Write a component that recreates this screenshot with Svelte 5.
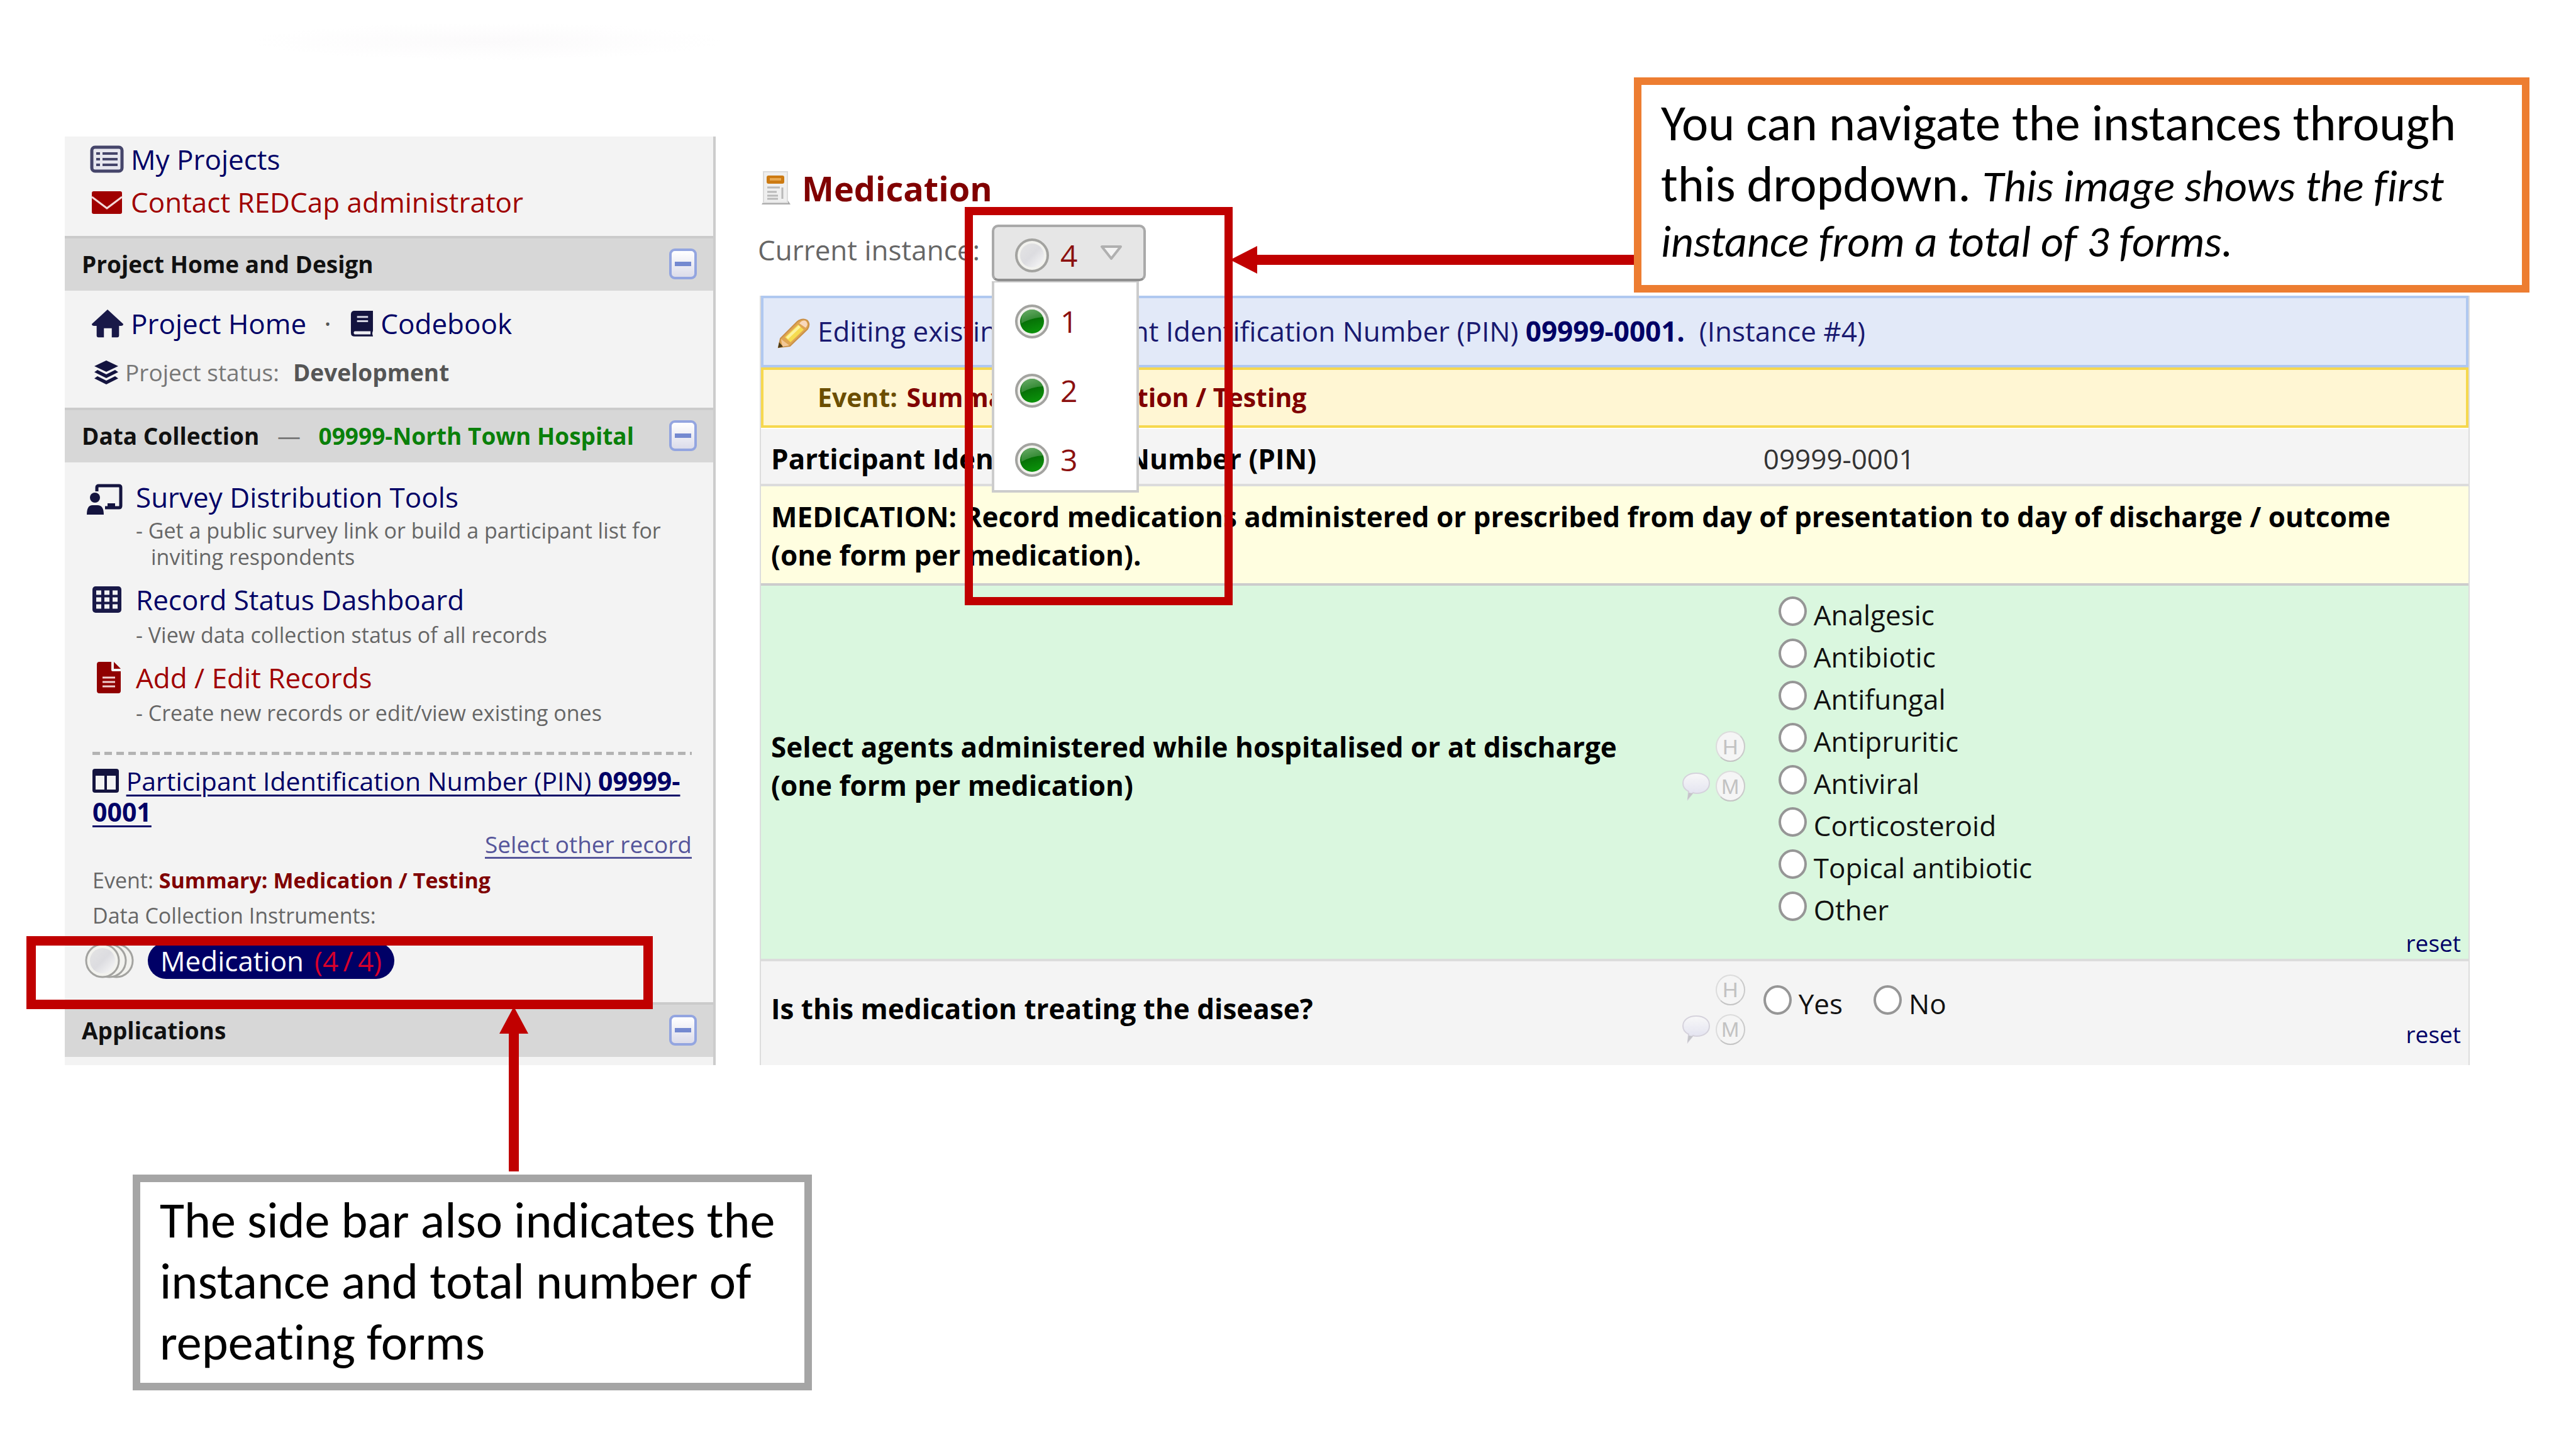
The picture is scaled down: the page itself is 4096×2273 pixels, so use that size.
<script>
  const agents = ['Analgesic', 'Antibiotic', 'Antifungal', 'Antipruritic', 'Antiviral', 'Corticosteroid', 'Topical antibiotic', 'Other'];
  const instances = [1, 2, 3];
  let agent = $state('');
  let treating = $state('');
</script>

{#snippet collapse(label)}
  <button class="collapse" aria-label={`Collapse ${label}`}><span></span></button>
{/snippet}

{#snippet dot(kind)}
  <svg class="dot" viewBox="0 0 54 54" aria-hidden="true">
    <circle cx="27" cy="27" r="25" fill="#f2f2ee" stroke="#a3a3a0" stroke-width="4" />
    {#if kind === 'green'}
      <circle cx="27" cy="27" r="19" fill="url(#dot-green)" />
      <path d="M10 30 Q8 10 27 8 Q42 9 45 20 Q26 21 10 30Z" fill="#fff" opacity=".2" />
    {:else}
      <circle cx="27" cy="27" r="19" fill="url(#dot-gray)" />
    {/if}
  </svg>
{/snippet}

{#snippet tools()}
  <div class="tools">
    <button class="badge history" aria-label="History">H</button>
    <button class="bubble" aria-label="Comment">
      <svg viewBox="0 0 46 46" aria-hidden="true">
        <path d="M23 2C35 2 44 8 44 18S35 34 24 34C22 34 20 34 18 33L10 43L11 31C5 28 2 24 2 18C2 8 11 2 23 2Z" fill="url(#bubble-fill)" stroke="#d5d2dc" stroke-width="2" />
        <path d="M11 33L18 34L9 44Z" fill="#c4c4c8" />
      </svg>
    </button>
    <button class="badge" aria-label="Missing data code">M</button>
  </div>
{/snippet}

<svg class="defs" aria-hidden="true">
  <defs>
    <linearGradient id="dot-green" x1="0" y1="0" x2="0.3" y2="1">
      <stop offset="0" stop-color="#4a9a48" />
      <stop offset="0.5" stop-color="#067006" />
      <stop offset="1" stop-color="#0a8f0a" />
    </linearGradient>
    <linearGradient id="dot-gray" x1="0" y1="0" x2="1" y2="1">
      <stop offset="0" stop-color="#e4e4e4" />
      <stop offset="0.5" stop-color="#dcdce0" />
      <stop offset="1" stop-color="#fafafa" />
    </linearGradient>
    <linearGradient id="bubble-fill" x1="0" y1="0" x2="0" y2="1">
      <stop offset="0" stop-color="#f8f8f8" />
      <stop offset="1" stop-color="#dedeee" />
    </linearGradient>
  </defs>
</svg>

<div class="page">
  <div class="smudge"></div>
  <div class="shot">
    <aside class="sidebar">
      <div class="block top">
        <a class="link" href="#projects">
          <svg class="ic" viewBox="0 0 54 44"><rect x="3" y="3" width="48" height="38" rx="5" fill="#e6e6ee" stroke="#45456a" stroke-width="5" /><path d="M10 13h6M10 22h6M10 31h6M20 13h24M20 22h24M20 31h24" stroke="#45456a" stroke-width="4" /></svg>
          My Projects
        </a>
        <a class="link red" href="#contact">
          <svg class="ic" viewBox="0 0 54 44"><rect x="3" y="5" width="48" height="36" rx="3" fill="#a00000" /><path d="M3 14L27 32L51 14" fill="none" stroke="#f3d9d9" stroke-width="3" /></svg>
          Contact REDCap administrator
        </a>
      </div>

      <h2 class="bar"><span>Project Home and Design</span>{@render collapse('Project Home and Design')}</h2>
      <div class="block home">
        <div class="row">
          <a class="link" href="#home">
            <svg class="ic" viewBox="0 0 54 48"><path d="M27 1L53 25Q53 28 49 28H46V44Q46 47 43 47H34V32H21V47H12Q9 47 9 44V28H5Q1 28 1 25Z" fill="#191948" /></svg>
            Project Home
          </a>
          <span class="mid">·</span>
          <a class="link book" href="#codebook">
            <svg viewBox="0 0 38 44"><path d="M7 1H37V34Q35 38 37 42V43H7Q1 43 1 37V7Q1 1 7 1Z" fill="#14143f" /><path d="M11 11H29M11 18H29" stroke="#d5d5e2" stroke-width="3" /><path d="M7 34.500H33V39.500H7Q4 37 7 34.500Z" fill="#eeeef4" /></svg>
            Codebook
          </a>
        </div>
        <div class="row status">
          <svg viewBox="0 0 40 40"><path d="M20 1L39 10L20 19L1 10Z" fill="#14143f" /><path d="M6 16L20 23L34 16L39 19.500L20 29L1 19.500Z" fill="#14143f" /><path d="M6 26L20 33L34 26L39 29.500L20 39L1 29.500Z" fill="#14143f" /></svg>
          <span>Project status:</span><b>Development</b>
        </div>
      </div>

      <h2 class="bar">
        <span>Data Collection <span class="dash">—</span> <span class="site">09999-North Town Hospital</span></span>
        {@render collapse('Data Collection')}
      </h2>
      <div class="block data">
        <div class="tool">
          <svg class="teach" viewBox="0 0 58 50"><path d="M17 12V6Q17 3 20 3H52Q55 3 55 6V35Q55 38 52 38H30" fill="none" stroke="#14143f" stroke-width="5" /><path d="M34 37V31H46V37Z" fill="#14143f" /><circle cx="14" cy="22" r="8" fill="#14143f" /><path d="M1 49Q1 34 10 34H18Q28 34 28 49Z" fill="#14143f" /></svg>
          <a class="link" href="#survey">Survey Distribution Tools</a>
          <p class="close">- Get a public survey link or build a participant list for inviting respondents</p>
        </div>
        <div class="tool">
          <svg class="grid" viewBox="0 0 46 42"><rect x="0" y="0" width="46" height="42" rx="5" fill="#191948" /><path d="M6 10H40M6 21H40M6 32H40" stroke="#f3f3f3" stroke-width="7" stroke-dasharray="8 5" /></svg>
          <a class="link" href="#dashboard">Record Status Dashboard</a>
          <p>- View data collection status of all records</p>
        </div>
        <div class="tool">
          <svg class="doc" viewBox="0 0 38 50"><path d="M4 0H23V13Q23 15 25 15H38V46Q38 50 34 50H4Q0 50 0 46V4Q0 0 4 0Z" fill="#900000" /><path d="M27 0L38 11H27Z" fill="#900000" /><path d="M9 25H29M9 32H29M9 39H29" stroke="#efd0d0" stroke-width="3" /></svg>
          <a class="link red" href="#records">Add / Edit Records</a>
          <p>- Create new records or edit/view existing ones</p>
        </div>

        <hr />

        <div class="record">
          <svg viewBox="0 0 42 38"><path d="M4 0H38Q42 0 42 4V34Q42 38 38 38H4Q0 38 0 34V4Q0 0 4 0Z" fill="#14143f" /><path d="M5 11H19V33H5ZM23 11H37V33H23Z" fill="#f3f3f3" /></svg>
          <a href="#record">Participant Identification Number (PIN) <b>09999-0001</b></a>
        </div>
        <a class="other" href="#other">Select other record</a>
        <p class="meta">Event: <b>Summary: Medication / Testing</b></p>
        <p class="meta">Data Collection Instruments:</p>
        <div class="instrument">
          <svg viewBox="0 0 78 58" aria-hidden="true">
            <circle cx="50" cy="29" r="26" fill="#f2f2ee" stroke="#a3a3a0" stroke-width="3" />
            <circle cx="39" cy="29" r="26" fill="#f2f2ee" stroke="#a3a3a0" stroke-width="3" />
            <circle cx="28" cy="29" r="26" fill="#f2f2ee" stroke="#a3a3a0" stroke-width="3" />
            <circle cx="28" cy="29" r="20" fill="url(#dot-gray)" />
          </svg>
          <a class="pill" href="#medication">Medication <span>(4&#8201;/&#8201;4)</span></a>
        </div>
      </div>

      <h2 class="bar"><span>Applications</span>{@render collapse('Applications')}</h2>
    </aside>

    <main>
      <h1>
        <svg viewBox="0 0 46 54" aria-hidden="true"><path d="M0 53H46L42 47H4Z" fill="#a9a9a9" /><rect x="3" y="1" width="38" height="49" fill="#efefef" stroke="#dcdcdc" stroke-width="2" /><rect x="8" y="7" width="28" height="13" rx="3" fill="#cc7a12" /><path d="M13 13H31" stroke="#e8a850" stroke-width="4" /><path d="M9 26H29M9 33H24M9 39H26M9 44H26M33 26V44" stroke="#b9b9b9" stroke-width="3" /></svg>
        Medication
      </h1>

      <div class="current">
        <span class="label">Current instance:</span>
        <div class="picker">
          <button class="toggle" aria-haspopup="true" aria-expanded="true">
            {@render dot('gray')}<span>4</span>
            <svg class="tri" viewBox="0 0 36 26" aria-hidden="true"><path d="M3 3H33L18 22Z" fill="#f4f4f4" stroke="#b0b0b0" stroke-width="4" stroke-linejoin="round" /></svg>
          </button>
          <ul class="menu">
            {#each instances as n}
              <li><button>{@render dot('green')}<span>{n}</span></button></li>
            {/each}
          </ul>
        </div>
      </div>

      <form class="sheet">
        <div class="notice editing">
          <svg viewBox="0 0 52 48" aria-hidden="true"><path d="M2 46L5 32L32 5Q40 -1 47 3Q53 9 48 17L20 44Z" fill="#dfa552" stroke="#c99048" stroke-width="2" /><path d="M12 30L33 10L42 18L21 38Z" fill="#f6dc50" /><path d="M14 30L34 11L37 14L17 33Z" fill="#fcf2a0" /><path d="M35 8Q41 1 46 5Q50 10 45 15Z" fill="#f8d8bc" /><path d="M6 33L19 43L8 45Z" fill="#f2c898" /><path d="M3 38L9 45L1 47Z" fill="#4a3a18" /></svg>
          <span>Editing existing Participant Identification Number (PIN) <b>09999-0001.</b>&nbsp; (Instance #4)</span>
        </div>
        <div class="notice event"><span>Event:</span> Summary: Medication / Testing</div>

        <div class="line id">
          <div class="q">Participant Identification Number (PIN)</div>
          <div class="field">09999-0001</div>
        </div>
        <div class="section">MEDICATION: Record medications administered or prescribed from day of presentation to day of discharge / outcome (one form per medication).</div>
        <div class="line agents" role="radiogroup" aria-labelledby="q-agents">
          <div class="q" id="q-agents">Select agents administered while hospitalised or at discharge (one form per medication)</div>
          {@render tools()}
          <div class="field">
            {#each agents as a}
              <label class="option"><input type="radio" name="agent" value={a} bind:group={agent} />{a}</label>
            {/each}
            <button type="button" class="reset" onclick={() => (agent = '')}>reset</button>
          </div>
        </div>
        <div class="line treat" role="radiogroup" aria-labelledby="q-treat">
          <div class="q" id="q-treat">Is this medication treating the disease?</div>
          {@render tools()}
          <div class="field">
            <div class="pair">
              {#each ['Yes', 'No'] as v}
                <label class="option"><input type="radio" name="treating" value={v} bind:group={treating} />{v}</label>
              {/each}
            </div>
            <button type="button" class="reset" onclick={() => (treating = '')}>reset</button>
          </div>
        </div>
      </form>
    </main>
  </div>

  <div class="frame frame-dropdown"></div>
  <div class="frame frame-sidebar"></div>
  <svg class="arrow arrow-left" viewBox="0 0 642 44" aria-hidden="true"><path d="M0 22L43 0V14H642V30H43V44Z" fill="#c00000" /></svg>
  <svg class="arrow arrow-up" viewBox="0 0 46 262" aria-hidden="true"><path d="M23 0L46 43H31V262H15V43H0Z" fill="#c00000" /></svg>
  <div class="note note-dropdown"><span>You can navigate the instances through this dropdown.{' '}</span><em>This image shows the first instance from a total of 3 forms.</em></div>
  <div class="note note-sidebar"><span>The side bar also indicates the instance and total number of repeating forms</span></div>
</div>

<style>
  :global(body) { margin: 0; background: #fff; }
  * { box-sizing: border-box; }
  .page { position: relative; min-height: 100vh; overflow: hidden; font-family: "Open Sans", "Noto Sans", sans-serif; font-size: 44px; color: #111; }
  .defs { position: absolute; width: 0; height: 0; }
  .smudge { position: absolute; left: 400px; top: 36px; width: 750px; height: 60px; background: radial-gradient(closest-side, #fbfafb, #fff); }
  .shot { display: flex; gap: 70px; padding: 217px 169px 0 103px; }
  svg { display: block; flex: none; }
  button { font: inherit; color: inherit; padding: 0; margin: 0; border: 0; background: none; cursor: pointer; }
  a { color: #000066; text-decoration: none; }
  p, h1, h2, ul { margin: 0; padding: 0; }

  .sidebar { flex: none; width: 1035px; background: #f3f3f3; border-right: 4px solid #ccc; }
  .link { display: flex; align-items: center; line-height: 60px; white-space: nowrap; }
  .red { color: #a00000; }
  .ic { width: 54px; margin-right: 11px; }
  .top { padding: 2px 0 20px 40px; }
  .top .link { line-height: 68px; }
  .bar { display: flex; align-items: center; justify-content: space-between; border-top: 4px solid #cbcbcb; background: #d7d7d7; padding: 15px 26px 17px 27px; font-size: 37px; line-height: 51px; font-weight: 700; color: #111; }
  .dash { font-weight: 400; color: #777; margin: 0 19px; }
  .site { color: #0a800a; }
  .collapse { width: 44px; height: 49px; border: 4px solid #93a5e0; border-radius: 9px; background: linear-gradient(#fff, #dcdcea); display: grid; place-items: center; }
  .collapse span { width: 26px; height: 7px; background: #7489d0; }
  .home { padding: 22px 0 26px 42px; }
  .home .ic { width: 52px; }
  .row { display: flex; align-items: center; white-space: nowrap; }
  .mid { width: 70px; padding-left: 28px; line-height: 60px; color: #555; }
  .book svg { width: 37px; margin-right: 11px; }
  .status { margin-top: 18px; gap: 10px; font-size: 37px; line-height: 60px; color: #777; padding-left: 4px; }
  .status svg { width: 40px; }
  .status b { margin-left: 12px; color: #555; }

  .data { padding: 25px 34px 37px 44px; }
  .tool { display: grid; grid-template-columns: 69px 1fr; align-items: center; margin-bottom: 17px; }
  .tool p { grid-column: 2; margin-top: 5px; padding-left: 24px; text-indent: -24px; font-size: 34px; line-height: 42px; color: #666; }
  .tool .close { margin-top: 2px; }
  .teach { width: 58px; margin-left: -10px; margin-top: 8px; }
  .grid { width: 46px; }
  .doc { width: 38px; margin-left: 7px; }
  hr { height: 5px; margin: 41px 0 17px; border: 0; background: repeating-linear-gradient(90deg, #b3b3b3 0 12px, transparent 12px 19px); }
  .record { font-size: 41px; line-height: 49px; }
  .record svg { display: inline-block; width: 42px; margin-right: 1px; vertical-align: -3px; }
  .record a { text-decoration: underline; text-decoration-thickness: 3px; text-underline-offset: 6px; }
  .other { display: block; margin: 2px 0 4px; text-align: right; font-size: 37px; line-height: 50px; color: #55559a; text-decoration: underline; text-decoration-thickness: 3px; text-underline-offset: 6px; }
  .meta { font-size: 34px; line-height: 56px; color: #666; white-space: nowrap; }
  .meta b { color: #800000; }
  .instrument { display: flex; align-items: center; gap: 22px; margin: 15px 0 0 -12px; }
  .instrument svg { width: 78px; }
  .pill { display: flex; gap: 17px; padding: 0 20px; border-radius: 30px; background: #000066; color: #fff; line-height: 58px; white-space: nowrap; }
  .pill span { color: #d8002c; }

  main { flex: 1; min-width: 0; padding-top: 46px; }
  h1 { display: flex; align-items: center; gap: 18px; padding-left: 3px; font-size: 54px; line-height: 72px; color: #800000; }
  h1 svg { width: 46px; }
  .current { display: flex; align-items: center; margin: 22px 0 23px -3px; color: #666; }
  .label { width: 372px; padding-bottom: 10px; white-space: nowrap; }
  .picker { position: relative; font-size: 48px; color: #8b1010; }
  .toggle { display: flex; align-items: center; width: 245px; height: 90px; padding: 8px 0 0 33px; border: 4px solid #a9a9a9; border-bottom-color: #8f8f8f; border-radius: 10px; background: #e6e6e6; line-height: 60px; }
  .toggle span, .menu span { margin-left: 18px; }
  .dot { width: 54px; }
  .tri { width: 36px; margin: 0 0 8px 36px; }
  .menu { position: absolute; z-index: 1; left: 0; top: 90px; display: flex; flex-direction: column; gap: 56px; width: 234px; padding: 35px 0 21px 33px; border: 4px solid #ccc; border-top-width: 2px; background: #fff; list-style: none; }
  .menu button { display: flex; align-items: center; height: 54px; line-height: 54px; }

  .sheet { border: 2px solid #ddd; border-width: 0 2px; }
  .notice { display: flex; align-items: center; white-space: pre; }
  .editing { gap: 12px; height: 114px; padding: 0 0 2px 22px; border: 4px solid #b0c8f0; background: #e2e9f8; color: #191970; }
  .editing svg { width: 52px; margin-top: 8px; }
  .editing b { color: #000066; }
  .event { height: 96px; margin-bottom: 2px; padding: 0 0 2px 86px; border: 4px solid #f6d84e; background: #fff6d3; font-size: 41px; font-weight: 700; color: #800000; }
  .event span { margin-right: 4px; color: #6b4e00; }

  .line { display: grid; grid-template-columns: 1442fr 150fr 1120fr; align-items: center; border-bottom: 4px solid #dcdcdc; background: #f4f4f4; }
  .q { padding-left: 16px; font-weight: 700; line-height: 61px; color: #000; }
  .id { padding: 17px 0 9px; line-height: 61px; }
  .id .field { grid-column: 3; color: #333; }
  .section { padding: 18px 60px 14px 16px; min-height: 156px; line-height: 61px; font-weight: 700; color: #000; border-bottom: 4px solid #ccc; background: #fffee0; }
  .agents { background: #daf7df; }
  .agents .q, .agents .tools { margin-bottom: 19px; }
  .field { position: relative; }
  .agents .field { padding: 13px 0 44px 24px; }
  .option { display: flex; align-items: center; line-height: 67px; white-space: nowrap; }
  .option input { appearance: none; width: 45px; height: 47px; margin: 0 11px 12px 0; border: 4px solid #969696; border-radius: 50%; background: #fff; }
  .option input:checked { background: #1a73e8; }
  .reset { position: absolute; right: 12px; bottom: 0; font-size: 37px; line-height: 50px; color: #000066; }
  .treat { border-bottom: 0; min-height: 165px; }
  .treat .q { padding-bottom: 14px; }
  .treat .tools { margin-bottom: 12px; }
  .treat .field { align-self: stretch; padding-top: 34px; }
  .treat .reset { bottom: 24px; }
  .pair { display: flex; gap: 49px; }
  .tools { display: grid; grid-template-columns: 47px 47px; justify-content: end; gap: 14px 7px; margin-right: 29px; }
  .badge { width: 47px; height: 49px; border: 2px solid #dcdcdc; border-bottom-color: #c4c4c4; border-right-color: #cacaca; border-radius: 50%; background: #f5f5f5; font-family: "Liberation Sans", sans-serif; font-size: 34px; line-height: 44px; color: #c2c2c2; }
  .history { grid-column: 2; }
  .bubble svg { width: 46px; }

  .frame { position: absolute; z-index: 2; border: 13px solid #c00000; }
  .frame-dropdown { left: 1534px; top: 329px; width: 426px; height: 633px; }
  .frame-sidebar { left: 42px; top: 1488px; width: 996px; height: 116px; border-width: 15px; }
  .arrow { position: absolute; z-index: 2; }
  .arrow-left { left: 1956px; top: 391px; width: 642px; }
  .arrow-up { left: 794px; top: 1600px; width: 46px; }
  .note { position: absolute; z-index: 3; padding: 12px 31px; border: 12px solid #a5a5a5; background: #fff; color: #000; font-family: Calibri, Carlito, "Open Sans", sans-serif; font-size: 70px; font-variant-ligatures: none; }
  .note span { font-size: 80px; }
  .note-dropdown { left: 2598px; top: 123px; width: 1424px; height: 342px; border-color: #ed7d31; }
  .note-sidebar { left: 211px; top: 1867px; width: 1080px; height: 343px; }
</style>
